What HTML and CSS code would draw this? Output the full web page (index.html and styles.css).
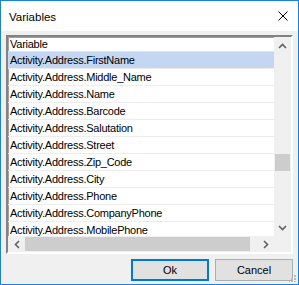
FILE: index.html
```html
<!DOCTYPE html>
<html lang="en">
<head>
  <meta charset="UTF-8">
  <title>Variables</title>
  <link rel="stylesheet" href="styles.css">
</head>
<body>
  <div class="window">
    <div class="titlebar">
      <span class="title">Variables</span>
      <svg class="close" width="10" height="10" viewBox="0 0 10 10">
        <path d="M0.5 0.5 L9.5 9.5 M9.5 0.5 L0.5 9.5" stroke="#000" stroke-width="1" fill="none"/>
      </svg>
    </div>
    <div class="client">
      <div class="list">
        <div class="rows">
          <div class="row head">Variable</div>
          <div class="row selected">Activity.Address.FirstName</div>
          <div class="row">Activity.Address.Middle_Name</div>
          <div class="row">Activity.Address.Name</div>
          <div class="row">Activity.Address.Barcode</div>
          <div class="row">Activity.Address.Salutation</div>
          <div class="row">Activity.Address.Street</div>
          <div class="row">Activity.Address.Zip_Code</div>
          <div class="row">Activity.Address.City</div>
          <div class="row">Activity.Address.Phone</div>
          <div class="row">Activity.Address.CompanyPhone</div>
          <div class="row">Activity.Address.MobilePhone</div>
        </div>
        <div class="vscroll">
          <div class="arrow">
            <svg width="9" height="6" viewBox="0 0 9 6"><path d="M1 5 L4.5 1.5 L8 5" stroke="#606060" stroke-width="1.6" fill="none"/></svg>
          </div>
          <div class="track">
            <div class="gap-v"></div>
            <div class="thumb-v"></div>
          </div>
          <div class="arrow">
            <svg width="9" height="6" viewBox="0 0 9 6"><path d="M1 1 L4.5 4.5 L8 1" stroke="#606060" stroke-width="1.6" fill="none"/></svg>
          </div>
        </div>
        <div class="hscroll">
          <div class="arrow">
            <svg width="6" height="9" viewBox="0 0 6 9"><path d="M5 1 L1.5 4.5 L5 8" stroke="#606060" stroke-width="1.6" fill="none"/></svg>
          </div>
          <div class="track">
            <div class="thumb-h"></div>
          </div>
          <div class="arrow">
            <svg width="6" height="9" viewBox="0 0 6 9"><path d="M1 1 L4.5 4.5 L1 8" stroke="#606060" stroke-width="1.6" fill="none"/></svg>
          </div>
        </div>
        <div class="corner"></div>
      </div>
      <div class="buttons">
        <button class="btn default" type="button">Ok</button>
        <button class="btn" type="button">Cancel</button>
      </div>
      <svg class="grip" width="7" height="7" viewBox="0 0 7 7">
        <rect x="5" y="0" width="2" height="2" fill="#bcbcbc"/>
        <rect x="2" y="3" width="2" height="2" fill="#bcbcbc"/>
        <rect x="5" y="3" width="2" height="2" fill="#bcbcbc"/>
        <rect x="-1" y="6" width="2" height="2" fill="#bcbcbc"/>
        <rect x="2" y="6" width="2" height="2" fill="#bcbcbc"/>
        <rect x="5" y="6" width="2" height="2" fill="#bcbcbc"/>
      </svg>
    </div>
  </div>
</body>
</html>
```

FILE: styles.css
```css
body {
  margin: 0;
  font-family: "Liberation Sans", Arial, sans-serif;
  font-size: 11px;
  color: #000;
}
.window {
  width: 299px;
  height: 285px;
  box-sizing: border-box;
  border: 1px solid #1883d7;
  display: flex;
  flex-direction: column;
  background-color: #f0f0f0;
}
.titlebar {
  height: 30px;
  flex: none;
  background-color: #fff;
  display: flex;
  align-items: center;
  justify-content: space-between;
  padding: 0 10px 0 8px;
}
.title {
  font-size: 11.5px;
  margin-top: 1px;
}
.client {
  flex: 1;
  position: relative;
  display: flex;
  flex-direction: column;
  padding: 4px 5px 0 5px;
}
.list {
  height: 219px;
  box-sizing: border-box;
  border-style: solid;
  border-width: 2px;
  border-color: #828282 #fff #fff #828282;
  box-shadow: inset 1px 1px 0 #a0a0a0;
  background-color: #fff;
  display: grid;
  grid-template-columns: 1fr 17px;
  grid-template-rows: 1fr 16px;
}
.rows {
  overflow: hidden;
  white-space: nowrap;
}
.row {
  height: 16px;
  line-height: 16px;
  padding-left: 2px;
  border-bottom: 1px solid #ededed;
  letter-spacing: -0.25px;
}
.row.head {
  height: 14px;
  line-height: 14px;
  border-bottom-color: #e3e3e3;
}
.row.selected {
  background-color: #c4d7f2;
}
.vscroll {
  background-color: #f0f0f0;
  display: flex;
  flex-direction: column;
}
.vscroll .track {
  flex: 1;
  display: flex;
  flex-direction: column;
}
.gap-v {
  height: 100px;
}
.thumb-v {
  height: 17px;
  margin: 0 1px;
  background-color: #cdcdcd;
}
.arrow {
  width: 17px;
  height: 17px;
  flex: none;
  display: flex;
  align-items: center;
  justify-content: center;
}
.hscroll {
  background-color: #f0f0f0;
  display: flex;
}
.hscroll .arrow {
  height: 16px;
}
.hscroll .track {
  flex: 1;
  display: flex;
  padding-right: 7px;
}
.thumb-h {
  flex: 1;
  margin: 1px 0;
  background-color: #cdcdcd;
}
.corner {
  background-color: #f0f0f0;
}
.buttons {
  display: flex;
  justify-content: flex-end;
  gap: 6px;
  margin-top: 5px;
}
.btn {
  width: 78px;
  height: 22px;
  box-sizing: border-box;
  margin: 0;
  padding: 0;
  font-family: "Liberation Sans", Arial, sans-serif;
  font-size: 11px;
  color: #000;
  background-color: #e1e1e1;
  border: 1px solid #adadad;
}
.btn.default {
  border: 2px solid #0078d7;
}
.grip {
  position: absolute;
  right: 2px;
  bottom: 2px;
}
```
